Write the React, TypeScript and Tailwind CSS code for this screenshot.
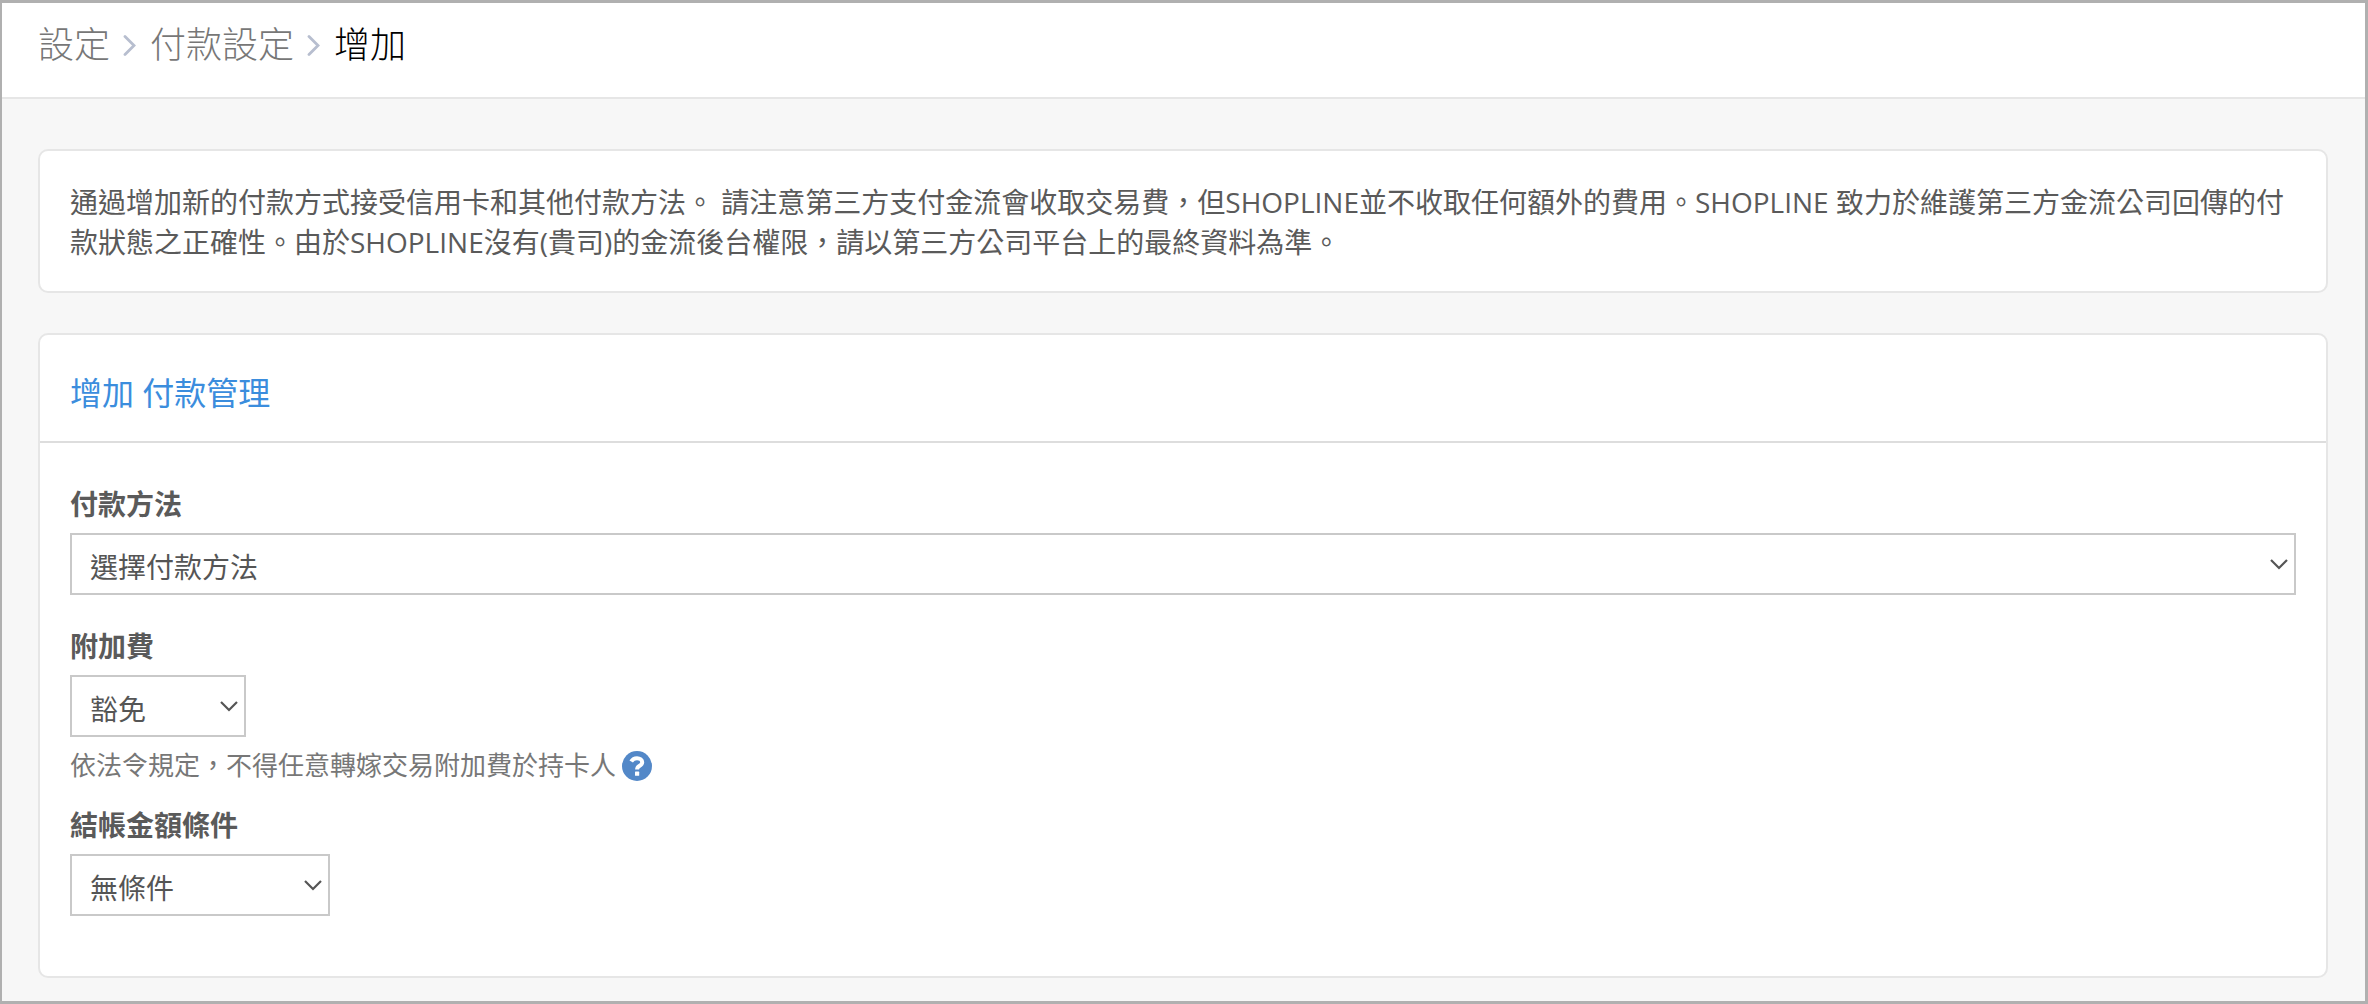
import React from "react";

const breadcrumbs = ["設定", "付款設定"];

const Separator = () => (
  <svg width="14" height="22" viewBox="0 0 14 22" fill="none" aria-hidden="true">
    <path
      d="M2 2.5 L11 11.5 L2 20.5"
      stroke="#b7becf"
      strokeWidth="2.8"
      strokeLinecap="round"
    />
  </svg>
);

const HelpIcon = () => (
  <svg width="30" height="30" viewBox="0 0 30 30" fill="none" aria-hidden="true">
    <circle cx="15" cy="15" r="15" fill="#5388c8" />
    <path
      d="M9.2 10.6 C10.6 8.2 12.5 7.2 15 7.2 C18 7.2 20.2 8.9 20.2 11.2 C20.2 13.2 18.9 14 17.3 15 C15.8 15.9 15.1 16.4 15.1 18.6"
      stroke="#ffffff"
      strokeWidth="4"
    />
    <rect x="13" y="20.6" width="4.2" height="4.2" rx="0.6" fill="#ffffff" />
  </svg>
);

const SelectField = ({
  id,
  label,
  options,
  width,
}: {
  id: string;
  label: string;
  options: string[];
  width: string;
}) => (
  <div>
    <label
      htmlFor={id}
      className="block w-fit pt-px text-[28px] leading-10 font-bold mb-[9px]"
    >
      {label}
    </label>
    <div className={`relative ${width}`}>
      <select
        id={id}
        className="block w-full h-[62px] appearance-none border-2 border-[#c9c9c9] bg-white pl-[18px] pr-12 pt-[6px] text-[28px] text-[#555555]"
      >
        {options.map((option) => (
          <option key={option}>{option}</option>
        ))}
      </select>
      <svg
        className="absolute right-2 top-1/2 -translate-y-1/2 pointer-events-none"
        width="18"
        height="12"
        viewBox="0 0 18 12"
        fill="none"
        aria-hidden="true"
      >
        <path d="M1 2 L9 10 L17 2" stroke="#555555" strokeWidth="2.2" />
      </svg>
    </div>
  </div>
);

const App = () => {
  return (
    <div className="min-h-screen bg-[#f7f7f7] border-3 border-l-2 border-[#b0b0b0] text-[#5a5a5a] font-['Open_Sans','Noto_Sans_CJK_TC',sans-serif]">
      <header className="h-24 bg-white border-b-2 border-[#e6e6e6] px-9 pb-[10px] flex items-center">
        <nav className="flex items-center gap-[13px] text-[36px] leading-[48px] font-light">
          {breadcrumbs.map((crumb) => (
            <React.Fragment key={crumb}>
              <a href="#" className="text-[#777777]">
                {crumb}
              </a>
              <Separator />
            </React.Fragment>
          ))}
          <span className="text-black">增加</span>
        </nav>
      </header>

      <main className="pt-[50px] pl-9 pr-[37px] pb-[23px] flex flex-col gap-10">
        <section className="bg-white border-2 border-[#e6e6e6] rounded-[10px] px-[30px] pt-[31px] pb-[29px]">
          <p className="text-[28px] leading-10">
            通過增加新的付款方式接受信用卡和其他付款方法。
            請注意第三方支付金流會收取交易費，但SHOPLINE並不收取任何額外的費用。SHOPLINE
            致力於維護第三方金流公司回傳的付款狀態之正確性。由於SHOPLINE沒有(貴司)的金流後台權限，請以第三方公司平台上的最終資料為準。
          </p>
        </section>

        <section className="bg-white border-2 border-[#e6e6e6] rounded-[10px]">
          <div className="h-[108px] border-b-2 border-[#dddddd] px-[30px] pt-[10px] flex items-center">
            <h2 className="text-[32px] leading-10 text-[#3b8ddd]">
              增加 付款管理
            </h2>
          </div>

          <form className="px-[30px] pt-10 pb-[60px]">
            <SelectField
              id="payment-method"
              label="付款方法"
              options={["選擇付款方法"]}
              width="w-full"
            />
            <div className="mt-[30px]">
              <SelectField
                id="surcharge"
                label="附加費"
                options={["豁免"]}
                width="w-[176px]"
              />
              <div className="mt-[10px] flex items-center gap-[6px] text-[26px] leading-[37px] text-[#777777]">
                <p>依法令規定，不得任意轉嫁交易附加費於持卡人</p>
                <button type="button" aria-label="說明">
                  <HelpIcon />
                </button>
              </div>
            </div>
            <div className="mt-5">
              <SelectField
                id="checkout-condition"
                label="結帳金額條件"
                options={["無條件"]}
                width="w-[260px]"
              />
            </div>
          </form>
        </section>
      </main>
    </div>
  );
};

export default App;
